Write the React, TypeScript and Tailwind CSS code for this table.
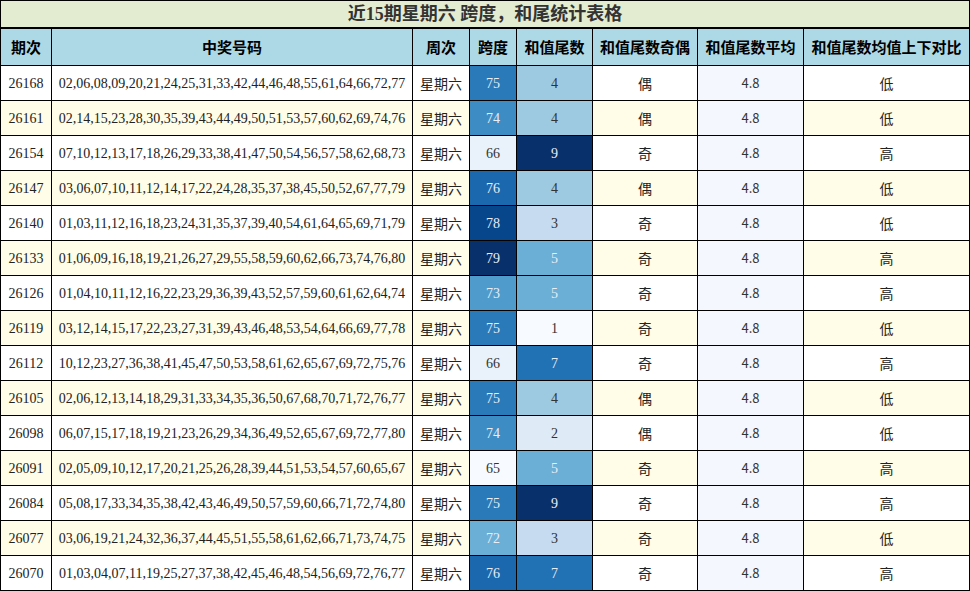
import React from "react";

type Row = { p: string; nums: string; span: number; tail: number; oe: string; hl: string };

const rows: Row[] = [
  { p: "26168", nums: "02,06,08,09,20,21,24,25,31,33,42,44,46,48,55,61,64,66,72,77", span: 75, tail: 4, oe: "偶", hl: "低" },
  { p: "26161", nums: "02,14,15,23,28,30,35,39,43,44,49,50,51,53,57,60,62,69,74,76", span: 74, tail: 4, oe: "偶", hl: "低" },
  { p: "26154", nums: "07,10,12,13,17,18,26,29,33,38,41,47,50,54,56,57,58,62,68,73", span: 66, tail: 9, oe: "奇", hl: "高" },
  { p: "26147", nums: "03,06,07,10,11,12,14,17,22,24,28,35,37,38,45,50,52,67,77,79", span: 76, tail: 4, oe: "偶", hl: "低" },
  { p: "26140", nums: "01,03,11,12,16,18,23,24,31,35,37,39,40,54,61,64,65,69,71,79", span: 78, tail: 3, oe: "奇", hl: "低" },
  { p: "26133", nums: "01,06,09,16,18,19,21,26,27,29,55,58,59,60,62,66,73,74,76,80", span: 79, tail: 5, oe: "奇", hl: "高" },
  { p: "26126", nums: "01,04,10,11,12,16,22,23,29,36,39,43,52,57,59,60,61,62,64,74", span: 73, tail: 5, oe: "奇", hl: "高" },
  { p: "26119", nums: "03,12,14,15,17,22,23,27,31,39,43,46,48,53,54,64,66,69,77,78", span: 75, tail: 1, oe: "奇", hl: "低" },
  { p: "26112", nums: "10,12,23,27,36,38,41,45,47,50,53,58,61,62,65,67,69,72,75,76", span: 66, tail: 7, oe: "奇", hl: "高" },
  { p: "26105", nums: "02,06,12,13,14,18,29,31,33,34,35,36,50,67,68,70,71,72,76,77", span: 75, tail: 4, oe: "偶", hl: "低" },
  { p: "26098", nums: "06,07,15,17,18,19,21,23,26,29,34,36,49,52,65,67,69,72,77,80", span: 74, tail: 2, oe: "偶", hl: "低" },
  { p: "26091", nums: "02,05,09,10,12,17,20,21,25,26,28,39,44,51,53,54,57,60,65,67", span: 65, tail: 5, oe: "奇", hl: "高" },
  { p: "26084", nums: "05,08,17,33,34,35,38,42,43,46,49,50,57,59,60,66,71,72,74,80", span: 75, tail: 9, oe: "奇", hl: "高" },
  { p: "26077", nums: "03,06,19,21,24,32,36,37,44,45,51,55,58,61,62,66,71,73,74,75", span: 72, tail: 3, oe: "奇", hl: "低" },
  { p: "26070", nums: "01,03,04,07,11,19,25,27,37,38,42,45,46,48,54,56,69,72,76,77", span: 76, tail: 7, oe: "奇", hl: "高" },
];

const spanColor: Record<number, string> = {
  65: "#f7fbff",
  66: "#e9f2fa",
  72: "#6baed6",
  73: "#4f9bcb",
  74: "#3d8dc4",
  75: "#2a7aba",
  76: "#1b68ae",
  78: "#08468b",
  79: "#08306b",
};
const tailColor: Record<number, string> = {
  1: "#f7fbff",
  2: "#deebf7",
  3: "#c6dbef",
  4: "#9ecae1",
  5: "#6baed6",
  7: "#2171b5",
  9: "#08306b",
};
const darkSpan = new Set([72, 73, 74, 75, 76, 78, 79]);
const darkTail = new Set([5, 7, 9]);

const serif = "font-['Liberation_Serif','Noto_Sans_CJK_SC',serif]";
const cjk = "font-['Noto_Sans_CJK_SC',sans-serif]";

export default function App() {
  return (
    <div className="w-[970px] h-[591px] bg-black p-px flex flex-col">
      <div
        className={`h-[26px] mb-[2px] bg-[#e3ebd0] flex items-center justify-center text-[18px] font-bold text-[#333] ${serif}`}
      >
        近15期星期六 跨度，和尾统计表格
      </div>
      <div className="grid grid-cols-[50px_360px_56px_46px_75px_104px_105px_165px] grid-rows-[36px_repeat(15,34px)] gap-px">
        {["期次", "中奖号码", "周次", "跨度", "和值尾数", "和值尾数奇偶", "和值尾数平均", "和值尾数均值上下对比"].map((h) => (
          <div
            key={h}
            className={`bg-[#add8e6] flex items-center justify-center text-[15px] font-bold text-black ${cjk}`}
          >
            {h}
          </div>
        ))}
        {rows.map((r, i) => {
          const stripe = i % 2 === 1 ? "bg-[#fffde8]" : "bg-white";
          return (
            <React.Fragment key={r.p}>
              <div className={`${stripe} flex items-center justify-center text-[14px] text-[#222] ${serif}`}>{r.p}</div>
              <div className={`${stripe} flex items-center justify-center text-[14px] text-[#222] ${serif}`}>{r.nums}</div>
              <div className={`${stripe} flex items-center justify-center text-[14px] text-[#222] ${cjk}`}>星期六</div>
              <div
                className={`flex items-center justify-center text-[14px] ${serif}`}
                style={{ backgroundColor: spanColor[r.span], color: darkSpan.has(r.span) ? "#e8eef5" : "#333" }}
              >
                {r.span}
              </div>
              <div
                className={`flex items-center justify-center text-[14px] ${serif}`}
                style={{ backgroundColor: tailColor[r.tail], color: darkTail.has(r.tail) ? "#e8eef5" : "#333" }}
              >
                {r.tail}
              </div>
              <div className={`${stripe} flex items-center justify-center text-[14px] text-[#222] ${cjk}`}>{r.oe}</div>
              <div className={`bg-[#f4f8fe] flex items-center justify-center text-[13px] text-[#333] ${cjk}`}>4.8</div>
              <div className={`${stripe} flex items-center justify-center text-[14px] text-[#222] ${cjk}`}>{r.hl}</div>
            </React.Fragment>
          );
        })}
      </div>
    </div>
  );
}
